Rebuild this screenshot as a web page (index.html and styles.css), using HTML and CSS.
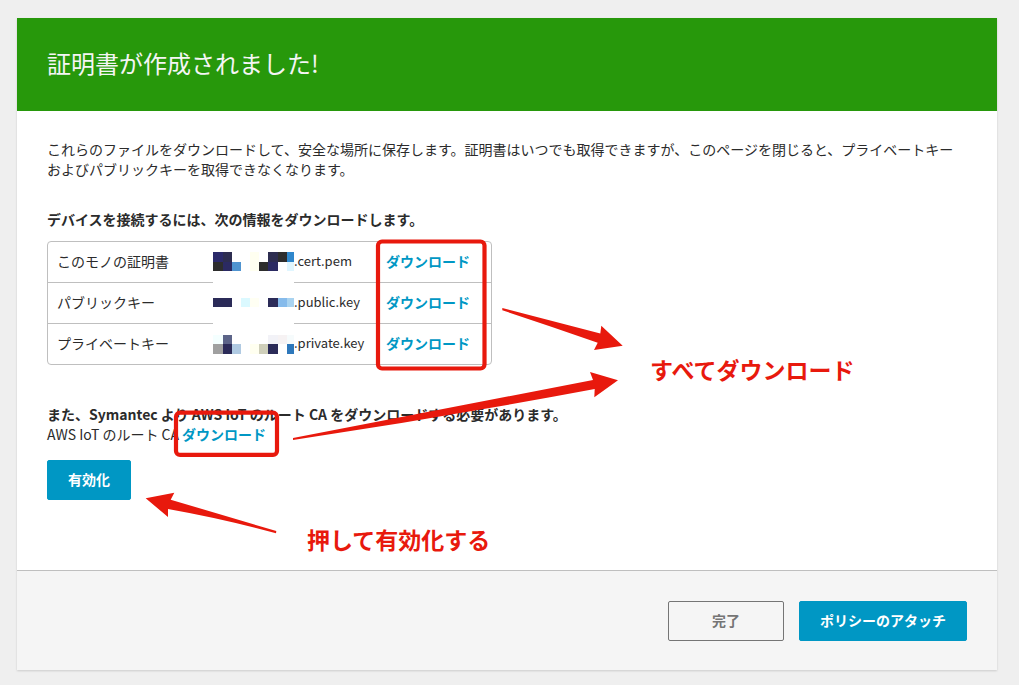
FILE: index.html
```html
<!DOCTYPE html>
<html lang="ja">
<head>
<meta charset="utf-8">
<title>証明書が作成されました!</title>
<link rel="stylesheet" href="styles.css">
</head>
<body>
<main class="panel">
  <header class="panel-header">
    <h1 class="title">証明書が作成されました!</h1>
  </header>
  <section class="panel-body">
    <p class="intro">これらのファイルをダウンロードして、安全な場所に保存します。証明書はいつでも取得できますが、このページを閉じると、プライベートキーおよびパブリックキーを取得できなくなります。</p>
    <h2 class="subtitle">デバイスを接続するには、次の情報をダウンロードします。</h2>
    <table class="files">
      <tbody>
        <tr><th scope="row">このモノの証明書</th><td class="file-name">.cert.pem</td><td><a class="link" href="#cert">ダウンロード</a></td></tr>
        <tr><th scope="row">パブリックキー</th><td class="file-name">.public.key</td><td><a class="link" href="#public">ダウンロード</a></td></tr>
        <tr><th scope="row">プライベートキー</th><td class="file-name">.private.key</td><td><a class="link" href="#private">ダウンロード</a></td></tr>
      </tbody>
    </table>
    <h2 class="root-title">また、Symantec より AWS IoT のルート CA をダウンロードする必要があります。</h2>
    <p class="root-ca"><span>AWS IoT のルート CA</span><a class="link" href="#root">ダウンロード</a></p>
    <button class="button primary" type="button">有効化</button>
  </section>
  <footer class="panel-footer">
    <button class="button outline" type="button">完了</button>
    <button class="button primary" type="button">ポリシーのアタッチ</button>
  </footer>
</main>
<div class="annotations">
  <svg class="marks" width="1019" height="685" viewBox="0 0 1019 685" aria-hidden="true">
    <g shape-rendering="crispEdges">
      <rect x="213" y="243" width="81" height="120" fill="#fff"/>
      <rect x="213" y="252" width="10" height="10" fill="#2b2a6a"/>
      <rect x="223" y="252" width="9" height="10" fill="#2d2d50"/>
      <rect x="250" y="252" width="9" height="19" fill="#fffff0"/>
      <rect x="268" y="252" width="10" height="10" fill="#2d2d50"/>
      <rect x="278" y="252" width="9" height="10" fill="#2d2d2d"/>
      <rect x="287" y="252" width="7" height="10" fill="#2f87cc"/>
      <rect x="213" y="262" width="10" height="9" fill="#2d2d2d"/>
      <rect x="223" y="262" width="9" height="9" fill="#2b2a62"/>
      <rect x="232" y="262" width="9" height="9" fill="#4f94d0"/>
      <rect x="259" y="262" width="9" height="9" fill="#2d2d2d"/>
      <rect x="268" y="262" width="10" height="9" fill="#2b2a62"/>
      <rect x="287" y="262" width="7" height="9" fill="#e0f6ff"/>
      <rect x="213" y="298" width="19" height="9" fill="#2b2b58"/>
      <rect x="241" y="298" width="9" height="9" fill="#dbf9ff"/>
      <rect x="250" y="298" width="9" height="9" fill="#fffff3"/>
      <rect x="268" y="298" width="10" height="9" fill="#2b2b58"/>
      <rect x="278" y="298" width="9" height="9" fill="#86bbeb"/>
      <rect x="287" y="298" width="7" height="9" fill="#a9d3f0"/>
      <rect x="213" y="335" width="10" height="9" fill="#f4ffff"/>
      <rect x="223" y="335" width="9" height="9" fill="#5c6488"/>
      <rect x="268" y="335" width="10" height="9" fill="#f2f2f7"/>
      <rect x="278" y="335" width="9" height="9" fill="#f6f2f3"/>
      <rect x="287" y="335" width="7" height="9" fill="#f6fbfc"/>
      <rect x="213" y="344" width="10" height="10" fill="#a0a0a0"/>
      <rect x="223" y="344" width="9" height="10" fill="#2b2b58"/>
      <rect x="232" y="344" width="9" height="10" fill="#b0cae2"/>
      <rect x="250" y="344" width="9" height="10" fill="#fffff0"/>
      <rect x="259" y="344" width="9" height="10" fill="#cfcfba"/>
      <rect x="268" y="344" width="10" height="10" fill="#2b2b58"/>
      <rect x="287" y="344" width="7" height="10" fill="#2e78bb"/>
    </g>
    <g fill="none" stroke="#e8190d" stroke-width="4.2">
      <rect x="378" y="241.500" width="106.500" height="127" rx="4"/>
      <rect x="176" y="412.700" width="101" height="42.200" rx="4"/>
    </g>
    <g fill="#e8190d">
      <path d="M502.300 308L600.300 333.600L601.300 325.700L622.700 345.700L594 350L597.700 342.700Q550 326 502.300 310.300Z"/>
      <path d="M293 438L593 380L590 372L618 380.300L594.300 397.300L594.700 389Q445 417 293 440Z"/>
      <path d="M276.300 531L170.700 499.700L174.300 492.700L145.700 498.300L168 517L168 509Q224 519 276 533.300Z"/>
    </g>
  </svg>
  <p class="note note-download">すべてダウンロード</p>
  <p class="note note-activate">押して有効化する</p>
</div>
</body>
</html>
```

FILE: styles.css
```css
* {
  box-sizing: border-box;
}

body {
  margin: 0;
  padding: 18px 22px 15px 17px;
  background: #efefef;
  color: #2b2b2b;
  font-family: "Noto Sans CJK JP", sans-serif;
  font-size: 14px;
  line-height: 20px;
}

h1, h2, p {
  margin: 0;
}

.panel {
  background: #fff;
  box-shadow: 0 1px 2px rgba(0, 0, 0, 0.15);
}

.panel-header {
  padding: 28px 30px 32px;
  background: #27980b;
  color: #f5f5f5;
}

.title {
  font-size: 24px;
  font-weight: 400;
  line-height: 33px;
}

.panel-body {
  padding: 28px 30px 70px;
}

.subtitle {
  margin: 30px 0 12px;
}

.subtitle, .root-title {
  font-size: 14px;
  font-weight: 700;
}

.files {
  width: 445px;
  max-width: 100%;
  border: 1px solid #bfbfbf;
  border-radius: 4px;
  border-spacing: 0;
  table-layout: fixed;
}

.files th, .files td {
  height: 41px;
  padding: 0 0 2px 9px;
  border-top: 1px solid #bfbfbf;
  font-weight: 400;
  text-align: left;
}

.files tr:first-child > * {
  height: 40px;
  border-top: 0;
}

.files th {
  width: 236px;
}

.files .file-name {
  width: 93px;
  padding-left: 10px;
  font-size: 13px;
}

.link {
  color: #0097c4;
  font-weight: 700;
  text-decoration: none;
}

.root-title {
  margin-top: 39px;
}

.root-ca {
  display: flex;
  gap: 3px;
  margin-bottom: 16px;
}

.button {
  height: 40px;
  padding: 0 20px 2px;
  border: 1px solid #0097c4;
  border-radius: 2px;
  font: inherit;
  font-weight: 700;
}

.primary {
  background: #0097c4;
  color: #fff;
}

.outline {
  min-width: 116px;
  border-color: #757575;
  background: #f5f5f5;
  color: #757575;
}

.panel-body .button {
  display: block;
}

.panel-footer {
  display: flex;
  justify-content: flex-end;
  gap: 15px;
  padding: 30px 30px 29px;
  border-top: 1px solid #bfbfbf;
  background: #f5f5f5;
}

.annotations {
  position: absolute;
  top: 0;
  left: 0;
  pointer-events: none;
}

.marks {
  display: block;
}

.note {
  position: absolute;
  color: #e8190d;
  font-size: 23px;
  font-weight: 700;
  line-height: 30px;
  white-space: nowrap;
}

.note-download {
  top: 354px;
  left: 650px;
}

.note-activate {
  top: 524px;
  left: 307px;
}
```
